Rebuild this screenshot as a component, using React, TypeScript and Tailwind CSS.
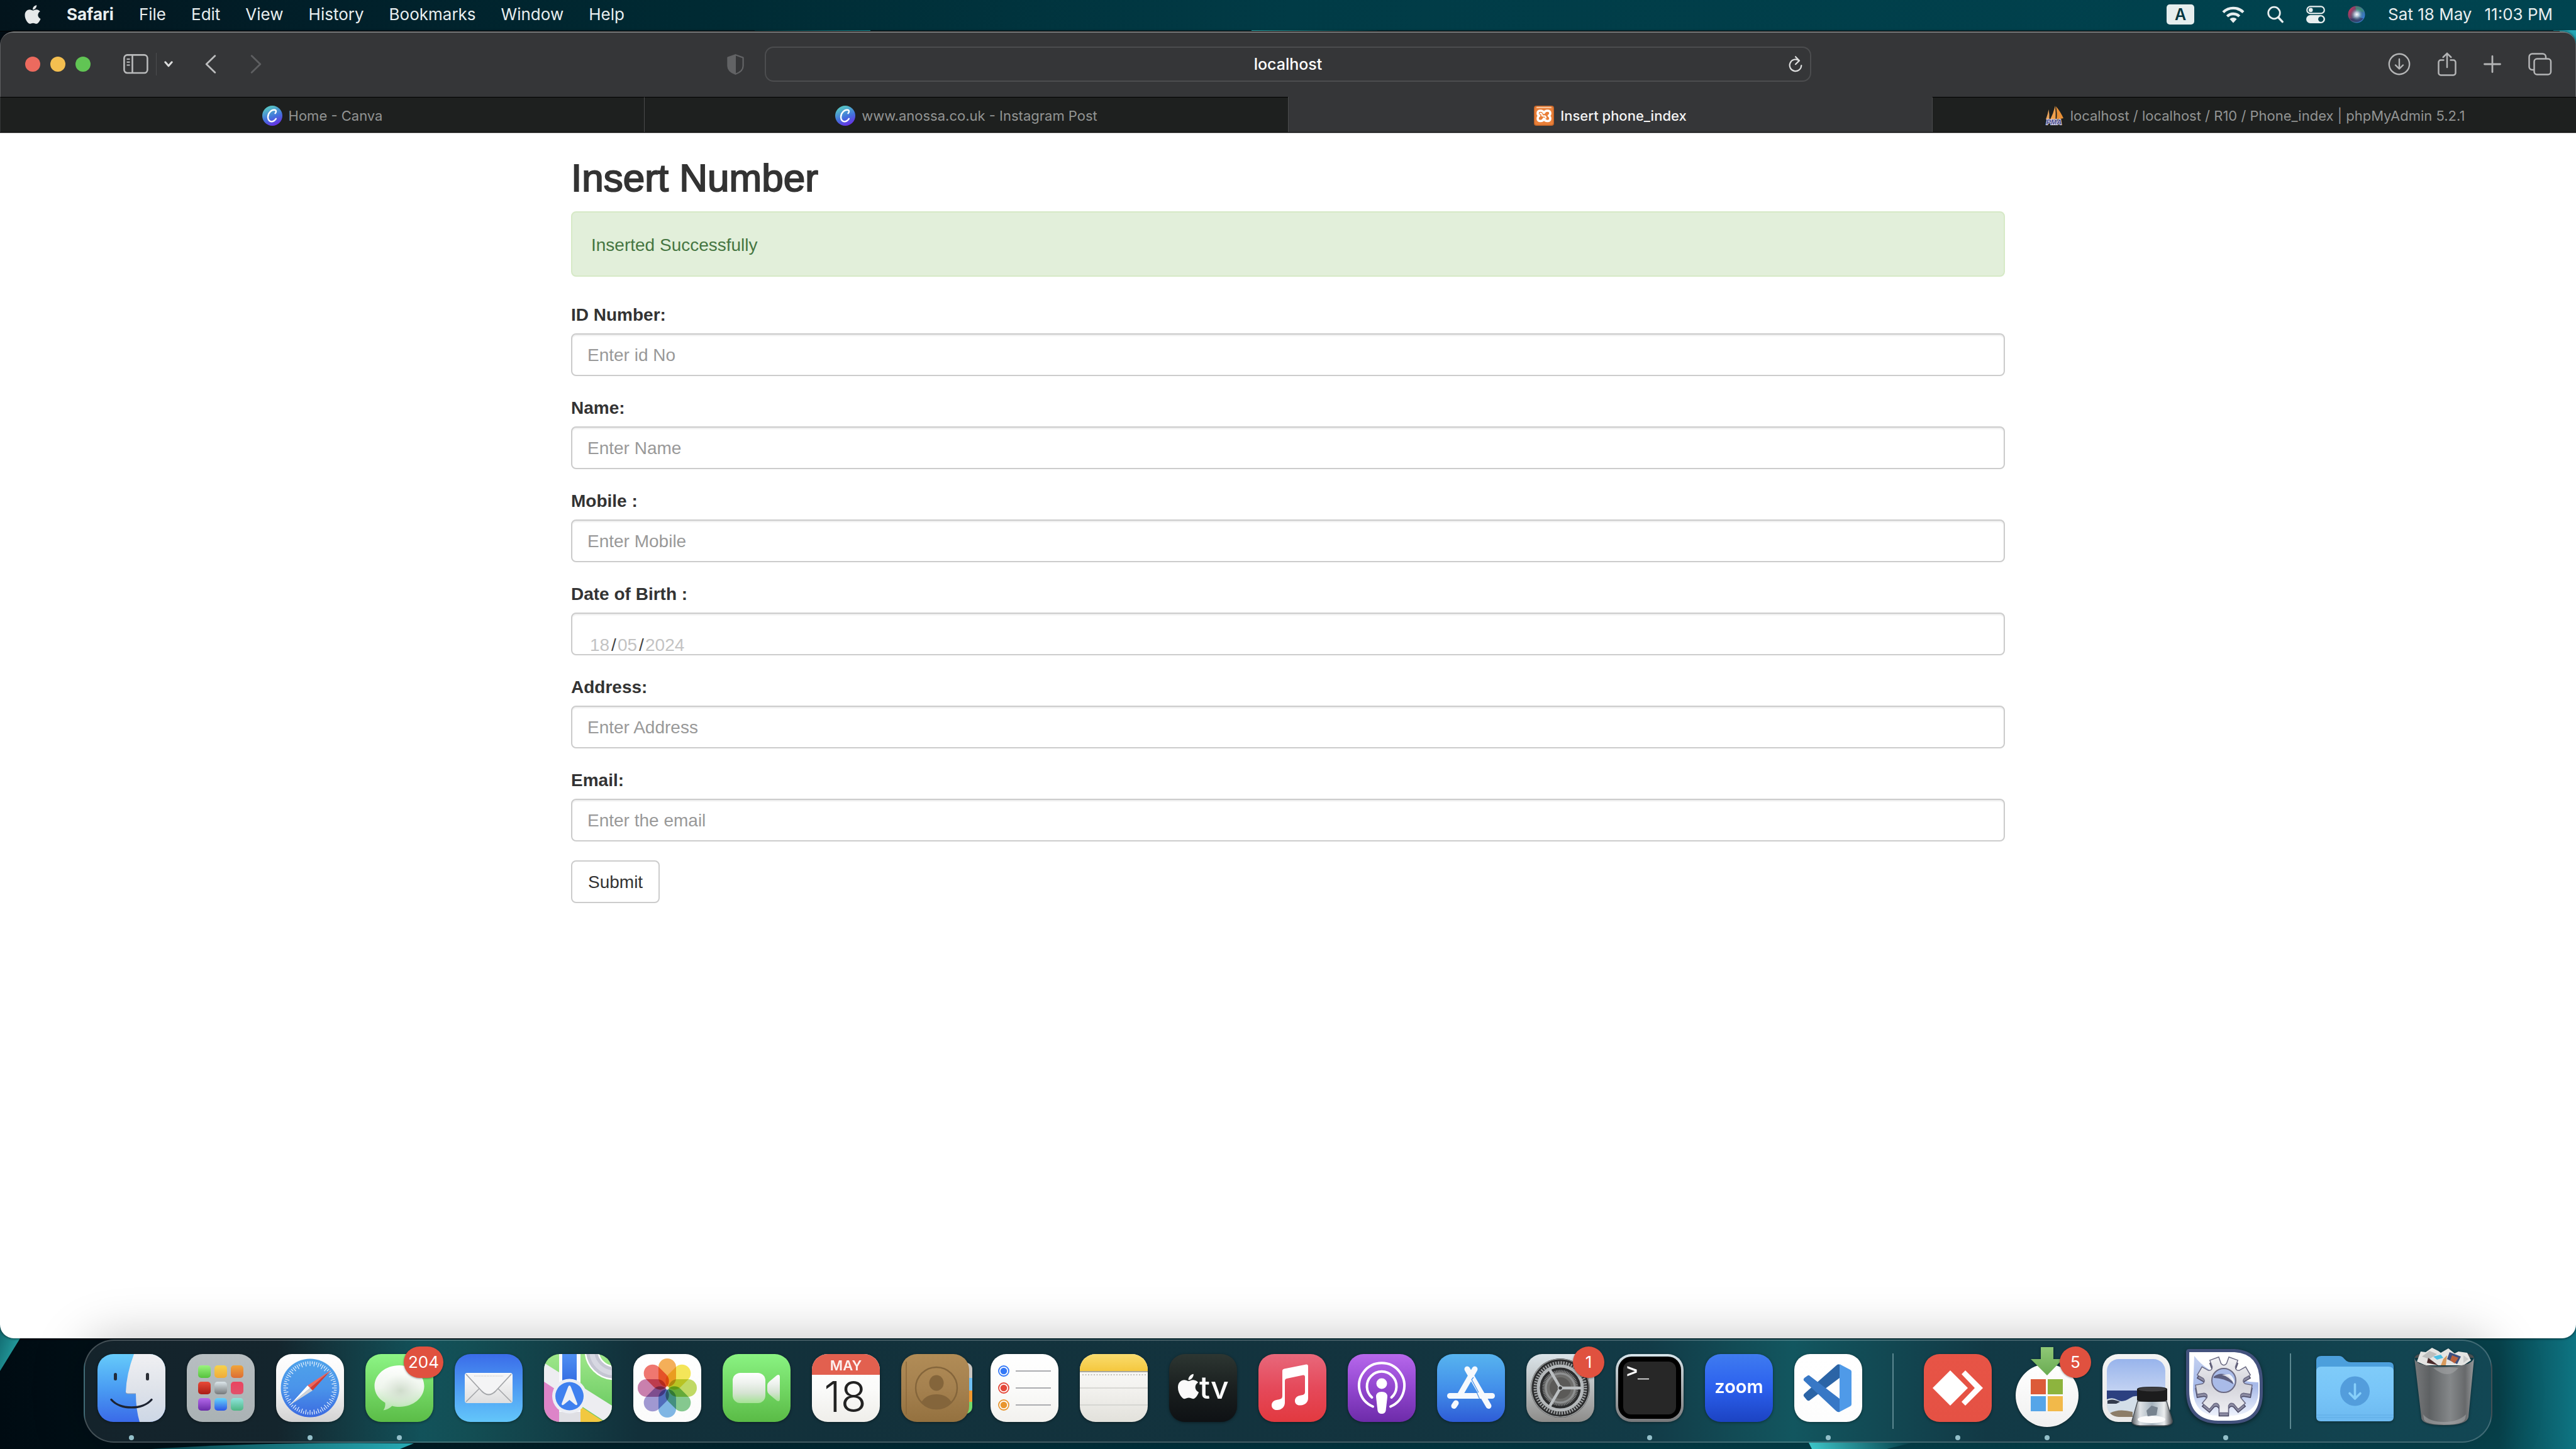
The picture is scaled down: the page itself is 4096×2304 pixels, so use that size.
import type { ReactNode } from "react";
import { FaApple } from "react-icons/fa";

const menus = ["File", "Edit", "View", "History", "Bookmarks", "Window", "Help"];

/* ---------- Wallpaper ---------- */

function Wallpaper() {
  return (
    <svg
      aria-hidden="true"
      className="absolute inset-0 h-full w-full"
      viewBox="0 0 4096 2304"
      preserveAspectRatio="none"
    >
      <defs>
        <linearGradient id="wpTop" x1="0" x2="1" y1="0" y2="0">
          <stop offset="0" stopColor="#03141c" />
          <stop offset="0.12" stopColor="#011f29" />
          <stop offset="0.27" stopColor="#002a33" />
          <stop offset="0.5" stopColor="#013b46" />
          <stop offset="1" stopColor="#004450" />
        </linearGradient>
        <linearGradient id="wpBase" x1="0" x2="1" y1="0" y2="0">
          <stop offset="0" stopColor="#000b12" />
          <stop offset="0.14" stopColor="#021c24" />
          <stop offset="0.4" stopColor="#01303c" />
          <stop offset="0.7" stopColor="#04414c" />
          <stop offset="0.93" stopColor="#06434f" />
          <stop offset="0.97" stopColor="#07434d" />
          <stop offset="1" stopColor="#0e7583" />
        </linearGradient>
        <linearGradient id="wpTri" x1="0" x2="1" y1="0" y2="1">
          <stop offset="0" stopColor="#0e5f66" />
          <stop offset="1" stopColor="#2bb0b0" />
        </linearGradient>
        <linearGradient id="wpGlow" x1="0" x2="1">
          <stop offset="0" stopColor="#0a4c55" />
          <stop offset="1" stopColor="#2cc0cb" />
        </linearGradient>
        <linearGradient id="wpGlowB" x1="0" x2="1">
          <stop offset="0" stopColor="#45dfe2" />
          <stop offset="1" stopColor="#064753" />
        </linearGradient>
      </defs>
      <rect width="4096" height="2304" fill="url(#wpBase)" />
      <rect width="4096" height="50" fill="url(#wpTop)" />
      <rect x="1200" y="48" width="184" height="1" fill="url(#wpGlow)" />
      <rect x="1990" y="48" width="200" height="1" fill="url(#wpGlowB)" />
      <rect x="4060" y="48" width="36" height="40" fill="#24a5b4" />
      <rect y="49" width="4070" height="1" fill="#000" />
      <path d="M0 2090V2180L32 2128V2090Z" fill="url(#wpTri)" />
      <path d="M240 2304Q420 2292 658 2295L636 2304Z" fill="url(#wpGlow)" />
      <path d="M2876 2294H3040L3000 2304H2881Z" fill="url(#wpGlowB)" />
    </svg>
  );
}

/* ---------- Menu bar ---------- */

function MenuBar() {
  return (
    <header className="relative flex h-[50px] shrink-0 items-center justify-between pr-[37px] pl-[38px] pb-[4px] text-[26px] leading-[32px] text-[#e8eeef]">
      <nav className="flex items-center gap-[40px]">
        <button aria-label="Apple menu" className="flex h-[36px] w-[28px] items-center justify-center">
          <FaApple className="h-[34px] w-[28px] text-[#e6e9ea]" />
        </button>
        <button className="font-bold">Safari</button>
        {menus.map((m) => (
          <button key={m}>{m}</button>
        ))}
      </nav>
      <div className="flex items-center gap-[36px]">
        <button className="mr-2 flex h-[32px] w-[44px] items-center justify-center rounded-[5px] bg-[#e6eeee] text-[25px] font-semibold text-[#02353f]">
          A
        </button>
        <button aria-label="Wi-Fi">
          <svg width="36" height="28" viewBox="0 0 36 28" fill="none" stroke="#e8eeef" strokeWidth="4.4">
            <path d="M2 10.5a22.6 22.6 0 0 1 32 0" />
            <path d="M8.3 17a13.7 13.7 0 0 1 19.4 0" />
            <path d="M18 27.5l-5.6-6.3a8.2 8.2 0 0 1 11.2 0z" fill="#e8eeef" stroke="none" />
          </svg>
        </button>
        <button aria-label="Search">
          <svg width="26" height="28" viewBox="0 0 26 28" fill="none" stroke="#e8eeef" strokeWidth="2.8" strokeLinecap="round">
            <circle cx="11" cy="11.5" r="9.3" />
            <path d="M18 19l6.2 6.6" strokeWidth="3.4" />
          </svg>
        </button>
        <button aria-label="Control Centre">
          <svg width="30" height="28" viewBox="0 0 30 28">
            <rect x="1.2" y="1.4" width="27.6" height="11" rx="5.5" fill="none" stroke="#e8eeef" strokeWidth="2.2" />
            <circle cx="7.2" cy="6.9" r="3.3" fill="#e8eeef" />
            <rect x="0" y="15" width="30" height="13" rx="6.5" fill="#e8eeef" />
            <circle cx="23.3" cy="21.5" r="4.2" fill="#02424d" />
          </svg>
        </button>
        <button aria-label="Siri">
          <svg width="28" height="28" viewBox="0 0 28 28">
            <defs>
              <linearGradient id="siriBase" x1="0" y1="0.2" x2="1" y2="0.8">
                <stop offset="0" stopColor="#d0335a" />
                <stop offset="0.4" stopColor="#5c4a70" />
                <stop offset="0.6" stopColor="#3a6f94" />
                <stop offset="1" stopColor="#3a7fe0" />
              </linearGradient>
              <radialGradient id="siriCore" cx="0.52" cy="0.5" r="0.4">
                <stop offset="0" stopColor="#fff" />
                <stop offset="0.4" stopColor="#d8e9f5" stopOpacity="0.7" />
                <stop offset="1" stopColor="#6aa" stopOpacity="0" />
              </radialGradient>
            </defs>
            <circle cx="14" cy="14" r="13.5" fill="url(#siriBase)" />
            <path d="M12 1a13 13 0 0 1 14 10q-6-4-12-1z" fill="#3f8f78" opacity="0.8" />
            <path d="M3 20q8 3 12-6q4 6 10 6a13 13 0 0 1-22 0z" fill="#33305c" opacity="0.7" />
            <circle cx="14" cy="14" r="12" fill="url(#siriCore)" />
          </svg>
        </button>
        <button className="flex gap-[20px]">
          <span>Sat 18 May</span>
          <span>11:03 PM</span>
        </button>
      </div>
    </header>
  );
}

/* ---------- Browser chrome ---------- */

function TitleBar() {
  return (
    <div className="grid h-[104px] grid-cols-[1fr_minmax(0,1664px)_1fr] items-center rounded-t-[20px] border-x border-t-2 border-x-[#5d5e60] border-t-[#77797a] bg-[#353638] pb-[2px]">
      <div className="flex items-center pl-[39px]">
        <div className="flex gap-4">
          <button aria-label="Close" className="size-6 rounded-full bg-[#ec6a5e]" />
          <button aria-label="Minimise" className="size-6 rounded-full bg-[#f4bf50]" />
          <button aria-label="Zoom" className="size-6 rounded-full bg-[#61c554]" />
        </div>
        <button aria-label="Show sidebar" className="ml-[52px]">
          <svg width="40" height="32" viewBox="0 0 40 32" fill="none" stroke="#b9babb" strokeWidth="2.6">
            <rect x="1.4" y="1.4" width="37" height="28.6" rx="5" />
            <path d="M14.5 1.4V30" />
            <path d="M5.5 8h5M5.5 12.8h5M5.5 17.6h5" strokeWidth="2" />
          </svg>
        </button>
        <div className="ml-3 h-[36px] w-px bg-[#4b4c4e]" />
        <button aria-label="Tab groups" className="ml-3">
          <svg width="14" height="10" viewBox="0 0 14 10" fill="none" stroke="#dcdddd" strokeWidth="3" strokeLinecap="round" strokeLinejoin="round">
            <path d="M1.8 1.8L7 7.8l5.2-6" />
          </svg>
        </button>
        <button aria-label="Back" className="ml-[51px]">
          <svg width="18" height="30" viewBox="0 0 18 30" fill="none" stroke="#bcbdbe" strokeWidth="2.8" strokeLinecap="round" strokeLinejoin="round">
            <path d="M15.8 1.8L2.2 15l13.6 13.2" />
          </svg>
        </button>
        <button aria-label="Forward" className="ml-[54px]">
          <svg width="18" height="30" viewBox="0 0 18 30" fill="none" stroke="#5e5f61" strokeWidth="2.8" strokeLinecap="round" strokeLinejoin="round">
            <path d="M2.2 1.8L15.8 15L2.2 28.2" />
          </svg>
        </button>
        <button aria-label="Privacy report" className="mr-[33px] ml-auto">
          <svg width="27" height="33" viewBox="0 0 27 33">
            <path d="M13.5 1.2L25.6 5.6V19q0 8.5-12.1 12.8Q1.4 27.5 1.4 19V5.6z" fill="none" stroke="#626365" strokeWidth="2.2" strokeLinejoin="round" />
            <path d="M14 1L1 5.6V19q0 8.5 13 13z" fill="#626365" />
          </svg>
        </button>
      </div>
      <div className="flex h-[56px] items-center rounded-[14px] border-2 border-[#4c4d4f] px-[12px]">
        <div className="w-[22px]" />
        <input
          aria-label="Address"
          defaultValue="localhost"
          className="min-w-0 flex-1 bg-transparent text-center text-[25px] leading-[32px] font-medium text-white outline-none"
        />
        <button aria-label="Reload">
          <svg width="22" height="28" viewBox="0 0 22 28" fill="none" stroke="#dcdddd" strokeWidth="2.2" strokeLinecap="round" strokeLinejoin="round">
            <path d="M16.5 8.3A9.3 9.3 0 1 0 20.3 16" />
            <path d="M11 2.2l6 6.2l-6 5.8" />
          </svg>
        </button>
      </div>
      <div className="flex items-center justify-end gap-[43px] pr-[37px]">
        <button aria-label="Downloads">
          <svg width="36" height="36" viewBox="0 0 36 36" fill="none" stroke="#b4b5b6" strokeWidth="2.4" strokeLinecap="round" strokeLinejoin="round">
            <circle cx="18" cy="18" r="16.2" />
            <path d="M18 10v15M12 19.5l6 6l6-6" />
          </svg>
        </button>
        <button aria-label="Share">
          <svg width="30" height="38" viewBox="0 0 30 38" fill="none" stroke="#b4b5b6" strokeWidth="2.5" strokeLinecap="round" strokeLinejoin="round">
            <path d="M9.5 12.5H5a3.5 3.5 0 0 0-3.5 3.5V33A3.5 3.5 0 0 0 5 36.5h20a3.5 3.5 0 0 0 3.5-3.5V16a3.5 3.5 0 0 0-3.5-3.5h-4.5" />
            <path d="M15 24V1.8M8.7 8L15 1.8L21.3 8" />
          </svg>
        </button>
        <button aria-label="New tab">
          <svg width="28" height="28" viewBox="0 0 28 28" stroke="#b4b5b6" strokeWidth="2.8" strokeLinecap="round">
            <path d="M14 1.5v25M1.5 14h25" />
          </svg>
        </button>
        <button aria-label="Tab overview">
          <svg width="38" height="36" viewBox="0 0 38 36" fill="none" stroke="#b4b5b6" strokeWidth="2.5">
            <rect x="9.5" y="9.5" width="26.5" height="25" rx="4.5" />
            <path d="M9.5 27H6.5A4.8 4.8 0 0 1 1.5 22V6.5A5 5 0 0 1 6.5 1.5H23a5 5 0 0 1 5 5v3" />
          </svg>
        </button>
      </div>
    </div>
  );
}

function CanvaIcon({ id }: { id: string }) {
  return (
    <svg width="32" height="32" viewBox="0 0 32 32">
      <defs>
        <linearGradient id={id} x1="0.3" y1="0" x2="0.7" y2="1">
          <stop offset="0.1" stopColor="#55bfc6" />
          <stop offset="0.55" stopColor="#4374dc" />
          <stop offset="1" stopColor="#6a2ae6" />
        </linearGradient>
      </defs>
      <circle cx="16" cy="16" r="16" fill={`url(#${id})`} />
      <path
        d="M20.5 12.2c2-1.2 2.3-5-1-5.4C13.8 6.2 8.9 12.6 9 18.3c.1 4.7 3 7.3 6.3 7 3-.3 5-2 6.6-4.6"
        fill="none"
        stroke="#fff"
        strokeWidth="2.4"
        strokeLinecap="round"
      />
    </svg>
  );
}

function XamppIcon() {
  return (
    <svg width="32" height="32" viewBox="0 0 32 32">
      <rect width="32" height="32" rx="4" fill="#c5662a" />
      <rect x="1.5" y="1.5" width="29" height="29" rx="3" fill="#ea8039" />
      <rect x="4" y="1.8" width="24" height="2.2" rx="1" fill="#f6c39c" />
      <path
        d="M16 11.5Q14.5 8 10.5 8Q6 8 6 12Q6 15 8.500 16Q6 17.500 6 20.500Q6 24.500 10.500 24.500Q14.500 24.500 16 20.500Q17.500 24.500 21.500 24.500Q26 24.500 26 20.500Q26 17.500 23.500 16Q26 15 26 12Q26 8 21.500 8Q17.500 8 16 11.500Z"
        fill="none"
        stroke="#fff"
        strokeWidth="3.6"
        strokeLinejoin="round"
      />
      <path d="M10 12.5Q13 12 13 16M19 19.500Q19 15.500 14.500 16.500" fill="none" stroke="#fff" strokeWidth="2.2" strokeLinecap="round" />
    </svg>
  );
}

function PmaIcon() {
  return (
    <svg width="32" height="32" viewBox="0 0 32 32">
      <path d="M3 22Q6 14 7.5 6Q9 14 8.5 22z" fill="#e8a35c" />
      <path d="M10 22Q15 12 18 0Q19 12 18.5 22z" fill="#f0a04c" />
      <path d="M19 1q7 8 12 19l-11 2q1.5-10-1-21z" fill="#e88f35" />
      <text
        x="16"
        y="30"
        textAnchor="middle"
        fontSize="11"
        fontWeight="700"
        fontStyle="italic"
        fontFamily="Liberation Sans"
        fill="#4a4a8c"
        stroke="#dcdcec"
        strokeWidth="2"
        paintOrder="stroke"
      >
        PMA
      </text>
    </svg>
  );
}

const tabs: { title: string; icon: ReactNode; active?: boolean }[] = [
  { title: "Home - Canva", icon: <CanvaIcon id="cv1" /> },
  { title: "www.anossa.co.uk - Instagram Post", icon: <CanvaIcon id="cv2" /> },
  { title: "Insert phone_index", icon: <XamppIcon />, active: true },
  { title: "localhost / localhost / R10 / Phone_index | phpMyAdmin 5.2.1", icon: <PmaIcon /> },
];

function TabBar() {
  return (
    <div role="tablist" className="flex h-[57px] border-b border-black">
      {tabs.map((t) => (
        <button
          key={t.title}
          role="tab"
          aria-selected={!!t.active}
          className={
            t.active
              ? "flex min-w-0 flex-1 items-center justify-center gap-[10px] border-l border-[#4a4b4c] bg-[#353638] pt-[3px] text-[22px] leading-[32px] font-medium text-[#f4f4f4]"
              : "flex min-w-0 flex-1 items-center justify-center gap-[10px] border-t border-l border-t-black border-l-[#4a4b4c] bg-[#1e201f] pt-[2px] text-[22px] leading-[32px] text-[#929493] first:border-l-[#353638]"
          }
        >
          {t.icon}
          <span>{t.title}</span>
        </button>
      ))}
    </div>
  );
}

/* ---------- Page ---------- */

const labelClass = "mb-[8px] block text-[28px] leading-[42px] font-bold text-[#333333]";
const boxClass =
  "block h-[68px] w-full rounded-[8px] border-2 border-[#cccccc] bg-white px-6 pt-[2px] text-[28px] text-[#555555] shadow-[inset_0_2px_2px_rgba(0,0,0,0.075)] placeholder:text-[#999999] outline-none";

function Field({ id, label, placeholder, type = "text" }: { id: string; label: string; placeholder: string; type?: string }) {
  return (
    <div className="mb-[30px]">
      <label htmlFor={id} className={labelClass}>
        {label}
      </label>
      <input id={id} type={type} placeholder={placeholder} className={boxClass} />
    </div>
  );
}

const datePart = "h-[28px] bg-transparent p-0 text-[28px] leading-[28px] placeholder:text-[#c3c3c3] outline-none";

function DateField() {
  return (
    <div className="mb-[30px]">
      <label htmlFor="dob-day" className={labelClass}>
        Date of Birth :
      </label>
      <div className="flex h-[68px] w-full items-end overflow-hidden rounded-[8px] border-2 border-[#cccccc] bg-white px-[28px] text-[28px] leading-[28px] text-[#444444] shadow-[inset_0_2px_2px_rgba(0,0,0,0.075)]">
        <input id="dob-day" placeholder="18" className={`${datePart} w-[32px]`} />
        <span className="w-3 text-center">/</span>
        <input aria-label="Month" placeholder="05" className={`${datePart} w-[32px]`} />
        <span className="w-3 text-center">/</span>
        <input aria-label="Year" placeholder="2024" className={`${datePart} w-[72px]`} />
      </div>
    </div>
  );
}

function InsertPage() {
  return (
    <main className="flex-1 border-t border-[#b5b5b5] bg-white font-['Liberation_Sans',Arial,sans-serif]">
      <div className="mx-auto w-full max-w-[2280px] pt-[38px]">
        <h2 className="mb-5 text-[62px] leading-[66px] font-normal text-[#333333] [-webkit-text-stroke:2px_#333333]">
          Insert Number
        </h2>
        <div role="alert" className="mb-10 rounded-[8px] border-2 border-[#d6e9c6] bg-[#e2efda] px-[30px] pt-[32px] pb-[28px] text-[28px] leading-[40px] text-[#467642]">
          Inserted Successfully
        </div>
        <form onSubmit={(e) => e.preventDefault()}>
          <Field id="idno" label="ID Number:" placeholder="Enter id No" />
          <Field id="name" label="Name:" placeholder="Enter Name" />
          <Field id="mobile" label="Mobile :" placeholder="Enter Mobile" />
          <DateField />
          <Field id="address" label="Address:" placeholder="Enter Address" />
          <Field id="email" label="Email:" placeholder="Enter the email" type="email" />
          <button type="submit" className="h-[68px] rounded-[8px] border-2 border-[#cccccc] bg-white px-[25px] pt-[2px] text-[28px] leading-[40px] text-[#333333]">
            Submit
          </button>
        </form>
      </div>
    </main>
  );
}

/* ---------- Dock icons ---------- */

function Grad({ id, stops }: { id: string; stops: string[] }) {
  return (
    <linearGradient id={id} x1="0" y1="0" x2="0" y2="1">
      {stops.map((c, i) => (
        <stop key={i} offset={i / (stops.length - 1)} stopColor={c} />
      ))}
    </linearGradient>
  );
}

function Tile({ id, stops, children }: { id: string; stops: string[]; children?: ReactNode }) {
  return (
    <svg width="108" height="108" viewBox="0 0 108 108" className="overflow-visible drop-shadow-[0_1px_2px_rgba(0,0,0,0.4)]">
      <defs>
        <Grad id={`${id}-bg`} stops={stops} />
        <clipPath id={`${id}-clip`}>
          <rect width="108" height="108" rx="25" />
        </clipPath>
      </defs>
      <rect width="108" height="108" rx="25" fill={`url(#${id}-bg)`} />
      {children}
    </svg>
  );
}

function FinderIcon() {
  return (
    <Tile id="finder" stops={["#66cbfa", "#4a9df3", "#3a6ae8"]}>
      <defs>
        <Grad id="finder-r" stops={["#f0f0f3", "#dfe3ea", "#cdd7e6"]} />
      </defs>
      <path clipPath="url(#finder-clip)" d="M58 0Q46 32 45 60Q45 63 48 63H61Q61 88 67 108H108V0Z" fill="url(#finder-r)" />
      <path d="M45 61Q45 63 48 63H61" fill="none" stroke="#8b98b0" strokeWidth="1" />
      <rect x="26" y="30" width="5" height="12" rx="2.5" fill="#222c3c" />
      <rect x="77" y="30" width="5" height="12" rx="2.5" fill="#2c2f36" />
      <path d="M22 72.5C36 89 72 89 86 72.5" fill="none" stroke="#1c2230" strokeWidth="3.4" strokeLinecap="round" />
    </Tile>
  );
}

const padColors = [
  ["#9af47e", "#56c13d"],
  ["#f6d24c", "#f0ab3a"],
  ["#efa53b", "#dc6d35"],
  ["#e94a38", "#a91d16"],
  ["#dbe6ea", "#76797b"],
  ["#ea4460", "#e0526b"],
  ["#b468ea", "#6a2ba8"],
  ["#66d5fb", "#2d55e6"],
  ["#8fe4dc", "#4db583"],
];

function LaunchpadIcon() {
  return (
    <Tile id="pad" stops={["#b7bec1", "#aab2b4"]}>
      <defs>
        {padColors.map((c, i) => (
          <Grad key={i} id={`pad-${i}`} stops={c} />
        ))}
      </defs>
      {padColors.map((_, i) => (
        <rect key={i} x={18 + (i % 3) * 26} y={18 + Math.floor(i / 3) * 26} width="20" height="20" rx="5" fill={`url(#pad-${i})`} />
      ))}
    </Tile>
  );
}

function SafariIcon() {
  return (
    <Tile id="saf" stops={["#ffffff", "#f4f4f4", "#d2d2d2"]}>
      <defs>
        <Grad id="saf-c" stops={["#4fa3ea", "#4a94ea", "#3b6ae0"]} />
      </defs>
      <circle cx="54" cy="54" r="46.5" fill="url(#saf-c)" />
      {Array.from({ length: 72 }, (_, i) => (
        <path key={i} d={i % 2 ? "M54 11.5v4.5" : "M54 11.5v7.5"} stroke="#e8f1fb" strokeWidth="1.2" transform={`rotate(${i * 5} 54 54)`} />
      ))}
      <path d="M87 26L50 50L54 54Z" fill="#f0685c" />
      <path d="M87 26L54 54L58 58Z" fill="#d23c33" />
      <path d="M22 81L50 50L54 54Z" fill="#ffffff" />
      <path d="M22 81L54 54L58 58Z" fill="#cfd2d6" />
    </Tile>
  );
}

function MessagesIcon() {
  return (
    <Tile id="msg" stops={["#8df585", "#5bbc47"]}>
      <defs>
        <Grad id="msg-b" stops={["#ffffff", "#eef5ec", "#b6e3ae"]} />
        <radialGradient id="msg-s" cx="0.5" cy="0.55" r="0.5">
          <stop offset="0" stopColor="#cfdccb" />
          <stop offset="1" stopColor="#dfe6dd" stopOpacity="0" />
        </radialGradient>
      </defs>
      <path d="M54 18C32 18 14.5 32.5 14.5 51C14.5 62 21 71.5 31.5 77.5C32 82 31 86 28.5 89.5C34.5 88.5 38.5 86 42.5 82.5C46 83.5 50 84 54 84C76 84 93.5 69.5 93.5 51S76 18 54 18Z" fill="url(#msg-b)" />
      <ellipse cx="56" cy="56" rx="32" ry="26" fill="url(#msg-s)" />
    </Tile>
  );
}

function MailIcon() {
  return (
    <Tile id="mail" stops={["#3a6ce9", "#4e9cf3", "#63c6fa"]}>
      <defs>
        <Grad id="mail-e" stops={["#fafafa", "#dededf"]} />
      </defs>
      <rect x="16" y="30" width="76" height="48" rx="4" fill="url(#mail-e)" />
      <path d="M18 76L40 54M90 76L68 54" stroke="#a3a5a8" strokeWidth="1.6" />
      <path d="M18 32L43 59Q54 70 65 59L90 32" fill="#f4f4f5" stroke="#a3a5a8" strokeWidth="1.8" />
      <path d="M31 35h46" stroke="#dcdcdc" strokeWidth="2" strokeDasharray="1.5 1" />
    </Tile>
  );
}

function MapsIcon() {
  return (
    <Tile id="maps" stops={["#9ee78a", "#62c55a"]}>
      <defs>
        <Grad id="maps-b" stops={["#4f8ff2", "#2c62dd"]} />
      </defs>
      <g clipPath="url(#maps-clip)">
        <path d="M0 40L26 58V108H0Z" fill="#dd84c8" />
        <path d="M56 82L96 108H56Z" fill="#f2c840" />
        <path d="M0 14L108 82V108H98L0 44Z" fill="#ededf1" />
        <rect x="24" y="0" width="34" height="108" fill="#fafafc" />
        <rect x="24" y="92" width="34" height="16" fill="#dfdfe4" />
        <rect x="29" y="0" width="23" height="60" fill="url(#maps-b)" />
        <circle cx="112" cy="-6" r="36" fill="none" stroke="#fff" strokeWidth="23" />
        <circle cx="112" cy="-6" r="36" fill="none" stroke="#c4c5d2" strokeWidth="18" />
        <circle cx="112" cy="-6" r="36" fill="none" stroke="#d7d8e2" strokeWidth="8" />
      </g>
      <circle cx="40.5" cy="67" r="27.5" fill="#eceef4" />
      <circle cx="40.5" cy="67" r="22.5" fill="#3f80ef" />
      <path d="M40.5 50Q42 50 43 53L53 79Q53 83 49 80L40.5 73L32 80Q28 83 28 79L38 53Q39 50 40.5 50Z" fill="#eef0f6" />
    </Tile>
  );
}

const petals = ["#f2a13c", "#f3e13c", "#b5d24a", "#6fbf7b", "#6aa9e0", "#8f86c9", "#c0699f", "#ec5f57"];

function PhotosIcon() {
  return (
    <Tile id="photos" stops={["#ffffff", "#fbfbfb"]}>
      <g className="isolate">
        {petals.map((c, i) => (
          <rect
            key={i}
            x="40"
            y="7"
            width="28"
            height="45"
            rx="14"
            fill={c}
            opacity="0.85"
            className="mix-blend-multiply"
            transform={`rotate(${i * 45} 54 54)`}
          />
        ))}
      </g>
      <circle cx="54" cy="54" r="2.5" fill="#f3ead8" />
    </Tile>
  );
}

function FaceTimeIcon() {
  return (
    <Tile id="ft" stops={["#8af382", "#5abb46"]}>
      <defs>
        <Grad id="ft-b" stops={["#ffffff", "#eef2ee", "#d5e3d2", "#a5e295"]} />
      </defs>
      <rect x="16" y="30" width="52" height="48" rx="12" fill="url(#ft-b)" />
      <path d="M71 50Q71 46.5 74 44L86 34Q91 31 91 37V71Q91 77 86 74L74 64Q71 61.5 71 58Z" fill="url(#ft-b)" />
    </Tile>
  );
}

function CalendarIcon() {
  return (
    <Tile id="cal" stops={["#ffffff", "#fbfbfa", "#efeeea"]}>
      <path clipPath="url(#cal-clip)" d="M0 0H108V33H0Z" fill="#e2604f" />
      <text x="54" y="26" textAnchor="middle" fontSize="22" fontWeight="600" fill="#fdf1ef">
        MAY
      </text>
      <text x="53" y="92" textAnchor="middle" fontSize="67" fontWeight="300" fill="#232323">
        18
      </text>
    </Tile>
  );
}

function ContactsIcon() {
  return (
    <svg width="108" height="108" viewBox="0 0 108 108" className="overflow-visible drop-shadow-[0_1px_2px_rgba(0,0,0,0.4)]">
      <defs>
        <Grad id="con-bg" stops={["#b18c56", "#a5814f", "#94713f"]} />
      </defs>
      <path d="M98 12Q113 14 113 24V38H98Z" fill="#c9c5c0" />
      <path d="M98 38H113V58H98Z" fill="#6fc0f5" />
      <path d="M98 58H113V76H98Z" fill="#f0982f" />
      <path d="M98 76H113V84Q113 94 98 97Z" fill="#72d96a" />
      <rect width="108" height="108" rx="25" fill="url(#con-bg)" />
      <path d="M8 12V96" stroke="#8a683a" strokeWidth="2" opacity="0.7" />
      <circle cx="56" cy="54" r="33" fill="none" stroke="#84653b" strokeWidth="2.4" />
      <ellipse cx="56" cy="46" rx="11.5" ry="12.5" fill="#84653b" />
      <path d="M32.5 76Q40 64 56 64T79.5 76Q70 87.5 56 87.5T32.5 76Z" fill="#84653b" />
    </svg>
  );
}

function RemindersIcon() {
  return (
    <Tile id="rem" stops={["#ffffff", "#fbfbfa", "#f2f1ee"]}>
      {["#3478f6", "#e4483a", "#e8962f"].map((c, i) => (
        <g key={c}>
          <circle cx="21" cy={27 + i * 27} r="8" fill="#fff" stroke={c} strokeWidth="1.8" />
          <circle cx="21" cy={27 + i * 27} r="5.3" fill={c} />
          <path d={`M40 ${27 + i * 27}H96`} stroke="#abacb0" strokeWidth="2" />
        </g>
      ))}
    </Tile>
  );
}

function NotesIcon() {
  return (
    <Tile id="notes" stops={["#fdfdfc", "#f3f2ef", "#e2e1db"]}>
      <defs>
        <Grad id="notes-y" stops={["#f9dc6e", "#f5c83e"]} />
      </defs>
      <path clipPath="url(#notes-clip)" d="M0 0H108V27H0Z" fill="url(#notes-y)" />
      <path d="M0 28H108" stroke="#a9a79c" strokeWidth="2" />
      <path d="M4 33H105" stroke="#c4c2bc" strokeWidth="2" strokeDasharray="2 2.5" />
      <path d="M0 54H108M0 81H108" stroke="#d0cfcb" strokeWidth="1.4" />
    </Tile>
  );
}

function TvIcon() {
  return (
    <Tile id="tv" stops={["#2d3632", "#1a1f1f", "#0e1114"]}>
      <FaApple x="8" y="29" size={45} color="#fafafa" />
      <text x="48" y="71" fontSize="50" fontWeight="500" fill="#fafafa">
        tv
      </text>
    </Tile>
  );
}

function MusicIcon() {
  return (
    <Tile id="music" stops={["#e8687b", "#e5495a", "#e2393f"]}>
      <path
        d="M38 27Q38 24 41 23.5L76 16.5Q79 16 79 19V70C79 77 74 81 67 81.5C61 82 58 78.5 58 74.5C58 69 62 66.5 68 65.5C72 64.8 74 64 74 60V36Q74 33 71 33.5L45 39Q42 39.5 42 43V77C42 84 37 88.5 30.5 89C24.5 89.5 21 86 21 81.5C21 76 25 73.5 31 72.5C36 71.5 38 71 38 66Z"
        fill="#ffffff"
      />
    </Tile>
  );
}

function PodcastsIcon() {
  return (
    <Tile id="pod" stops={["#b768ec", "#9246cf", "#6d2ba9"]}>
      <g fill="none" stroke="#ffffff" strokeWidth="4" strokeLinecap="round">
        <path d="M40 83.5A36 36 0 1 1 68 83.5" />
        <path d="M38.5 69A23.5 23.5 0 1 1 69.5 69" />
      </g>
      <circle cx="54" cy="47" r="8.5" fill="#fff" />
      <path d="M45 68Q45 60 54 60T63 68L60.5 90Q59.5 95 54 95T47.5 90Z" fill="#fff" />
    </Tile>
  );
}

function AppStoreIcon() {
  return (
    <Tile id="store" stops={["#57b4ef", "#4390ea", "#2e5cd6"]}>
      <g stroke="#f6f9fd" strokeWidth="9" strokeLinecap="round" fill="none">
        <path d="M60 24L37 64" />
        <path d="M30 78L27 82.5" />
        <path d="M48 24L82 82.5" />
        <path d="M20.5 66.5H87.5" />
      </g>
      <path d="M58 37L55 40.5L66 61" stroke="#4390ea" strokeWidth="1.2" fill="none" />
      <path d="M63 61L67.5 71" stroke="#4b8fe0" strokeWidth="1.2" />
    </Tile>
  );
}

function SettingsIcon() {
  return (
    <Tile id="set" stops={["#dbe4e9", "#b8bcbd", "#8d8c8a"]}>
      <circle cx="54" cy="54" r="47" fill="#2c2d2e" />
      <circle cx="54" cy="54" r="46" fill="none" stroke="#a9acad" strokeWidth="1.2" />
      <circle cx="54" cy="54" r="40" fill="none" stroke="#9fa2a4" strokeWidth="5" strokeDasharray="2.2 1.99" />
      <circle cx="54" cy="54" r="35" fill="none" stroke="#b4b8ba" strokeWidth="5" />
      <circle cx="54" cy="54" r="26" fill="#6f6f6d" />
      <circle cx="54" cy="54" r="27" fill="none" stroke="#8f9192" strokeWidth="3" strokeDasharray="1.3 1.2" />
      <circle cx="54" cy="54" r="23" fill="none" stroke="#8f9192" strokeWidth="3" />
      <circle cx="54" cy="54" r="17" fill="#5b5a58" />
      {[90, 210, 330].map((a) => (
        <path key={a} d="M54 54V20" stroke="#bcc0c2" strokeWidth="4.5" transform={`rotate(${a} 54 54)`} />
      ))}
      <circle cx="54" cy="54" r="3.5" fill="#3b3b3b" stroke="#c4c8ca" strokeWidth="1.5" />
    </Tile>
  );
}

function TerminalIcon() {
  return (
    <Tile id="term" stops={["#d5e4ea", "#a9adb0", "#77787a"]}>
      <rect x="4" y="4" width="100" height="99" rx="21" fill="#000" />
      <rect x="12" y="12" width="84" height="84" rx="12" fill="#272727" />
      <text x="17" y="37" fontSize="30" fontWeight="700" fontFamily="Liberation Mono" fill="#fff">
        &gt;_
      </text>
    </Tile>
  );
}

function ZoomIcon() {
  return (
    <Tile id="zoom" stops={["#3f7bf0", "#2b60ee", "#1c43c2"]}>
      <text x="54" y="62" textAnchor="middle" fontSize="29" fontWeight="600" fill="#fff">
        zoom
      </text>
    </Tile>
  );
}

function CodeIcon() {
  return (
    <Tile id="code" stops={["#ffffff", "#fdfdfd"]}>
      <path d="M15 67Q14 65 16 63L67 18Q70 15 72 17V38L24 74Q22 75 20 73Z" fill="#2b64a6" />
      <path d="M15 42Q14 40 16 38L21 34.5Q23 33 25 35L72 71V92Q69 93 66 90L15 42Z" fill="#3878c6" />
      <path d="M72 16L89 25Q91 26 91 28V80Q91 82 89 83L72 92Z" fill="#4f9ae8" />
    </Tile>
  );
}

function AnyDeskIcon() {
  return (
    <Tile id="any" stops={["#e75446", "#e55144"]}>
      <path d="M14 54L42 26L70 54L42 82Z" fill="#fff" />
      <path d="M60 32L66 26L94 54L66 82L60 76L81 54Z" fill="#fff" />
    </Tile>
  );
}

function UpdateIcon() {
  return (
    <svg width="108" height="108" viewBox="0 0 108 108" className="overflow-visible drop-shadow-[0_1px_2px_rgba(0,0,0,0.4)]">
      <defs>
        <Grad id="upd" stops={["#ffffff", "#f0f0f0"]} />
        <Grad id="upd-a" stops={["#8fc876", "#6aab52"]} />
      </defs>
      <circle cx="54" cy="66" r="50" fill="url(#upd)" />
      <rect x="28" y="40" width="24" height="24" fill="#dc5b39" />
      <rect x="55" y="40" width="24" height="24" fill="#8db43e" />
      <rect x="28" y="67" width="24" height="24" fill="#55a5e8" />
      <rect x="55" y="67" width="24" height="24" fill="#f2b94a" />
      <path d="M44 -11H64V8H79L54 34L28 8H44Z" fill="url(#upd-a)" />
    </svg>
  );
}

function PreviewIcon() {
  return (
    <Tile id="prev" stops={["#f3f3f3", "#e9e9e9"]}>
      <defs>
        <Grad id="prev-sky" stops={["#98b4ec", "#c2d2f2"]} />
        <clipPath id="prev-photo">
          <rect x="7" y="8" width="93" height="92" rx="19" />
        </clipPath>
        <linearGradient id="prev-jar" x1="0" x2="1">
          <stop offset="0" stopColor="#5a5f64" />
          <stop offset="0.2" stopColor="#e0e4e7" />
          <stop offset="0.5" stopColor="#a3b1bc" />
          <stop offset="0.8" stopColor="#eceeef" />
          <stop offset="1" stopColor="#4a4f54" />
        </linearGradient>
      </defs>
      <g clipPath="url(#prev-photo)">
        <rect x="7" y="8" width="93" height="50" fill="url(#prev-sky)" />
        <rect x="7" y="58" width="93" height="20" fill="#2c4080" />
        <path d="M7 72Q16 68 24 73T44 70T70 74V100H7Z" fill="#d3dee8" />
        <path d="M8 74Q16 70 28 76L22 79H8Z" fill="#333b4c" />
        <path d="M12 94Q26 86 48 92V100H12Z" fill="#8c7d68" />
      </g>
      <path d="M56 75L47 106Q46 113 60 114H98Q112 113 111 106L102 75Z" fill="url(#prev-jar)" stroke="#4c5156" strokeWidth="1.4" />
      <ellipse cx="78" cy="104" rx="22" ry="6" fill="#fbfbfb" />
      <path d="M70 90l8-8l10 3l-2 12l-14 2z" fill="#77838f" />
      <path d="M55 56Q55 52 79 52T103 56V73Q103 76 79 76T55 73Z" fill="#1c1c1d" />
      <ellipse cx="79" cy="56" rx="22" ry="3.5" fill="#3d3d3f" />
    </Tile>
  );
}

function gearPath(cx: number, cy: number, outer: number, inner: number, teeth: number) {
  const pts: string[] = [];
  const step = (Math.PI * 2) / teeth;
  const at = (r: number, a: number) => `${(cx + r * Math.sin(a)).toFixed(1)} ${(cy - r * Math.cos(a)).toFixed(1)}`;
  for (let i = 0; i < teeth; i++) {
    const a = i * step + step / 2;
    pts.push(`${i ? "L" : "M"}${at(inner, a - step * 0.32)}`);
    pts.push(`L${at(outer, a - step * 0.24)}`, `L${at(outer, a + step * 0.24)}`, `L${at(inner, a + step * 0.32)}`);
    pts.push(`Q${at(inner - 5, a + step / 2)} ${at(inner, a + step * 0.68)}`);
  }
  return pts.join("") + "Z";
}

function GearAppIcon() {
  return (
    <svg width="108" height="108" viewBox="0 0 108 108" className="overflow-visible drop-shadow-[0_2px_3px_rgba(0,0,0,0.5)]">
      <defs>
        <Grad id="gear-m" stops={["#f1f1f4", "#d3d3da", "#eeeef2"]} />
        <Grad id="gear-b" stops={["#c3d0f0", "#a7b9e8", "#eef2fc"]} />
      </defs>
      <path d="M-6.5 -3Q-6.5 -5.5 -4 -5.5H68Q110.5 -3 110.5 45V62Q110.5 108.5 62 108.5H42Q-6.5 107 -6.5 58Z" fill="#ffffff" stroke="#43527d" strokeWidth="5" />
      <path d="M4 3Q24 30 60 36Q80 44 106 45V62Q104 96 62 98H42Q4 98 2 58Z" fill="url(#gear-b)" />
      <path d={gearPath(51, 54, 45, 34, 9)} fill="#8d8ca3" stroke="#4c4b66" strokeWidth="1.5" />
      <path d={gearPath(51, 49, 45, 34, 9)} fill="url(#gear-m)" stroke="#6b6a83" strokeWidth="1.5" />
      <circle cx="51" cy="42" r="19" fill="#a9bbe8" stroke="#6b6a83" strokeWidth="2" />
      <path d="M35 38Q51 38 66 48A19 19 0 0 0 35 36Z" fill="#5d6080" />
      <path d="M48 33Q60 36 68 48A18 18 0 0 0 60 32Z" fill="#ffffff" opacity="0.8" />
    </svg>
  );
}

function FolderIcon() {
  return (
    <svg width="108" height="108" viewBox="0 0 108 108" className="overflow-visible drop-shadow-[0_1px_2px_rgba(0,0,0,0.4)]">
      <defs>
        <Grad id="fold" stops={["#7fcbf9", "#78c5f8", "#6db9f0"]} />
      </defs>
      <path d="M-8 10Q-8 3 0 3H28Q33 3 36 7L40 11Q43 13 47 13H108Q115 13 115 20V60H-8Z" fill="#4c9fdc" />
      <path d="M-8 28Q-8 20 0 20H107Q115 20 115 28V100Q115 107 108 107H-1Q-8 107 -8 100Z" fill="url(#fold)" />
      <path d="M-8 97H115M-8 101H115" stroke="#5fabe6" strokeWidth="1.2" />
      <circle cx="53.5" cy="59" r="23.5" fill="#539ddc" />
      <path d="M53.5 48V70M45 62.5L53.5 71L62 62.5" fill="none" stroke="#86cffa" strokeWidth="3.6" strokeLinecap="round" strokeLinejoin="round" />
    </svg>
  );
}

function TrashIcon() {
  return (
    <svg width="108" height="108" viewBox="0 0 108 108" className="overflow-visible drop-shadow-[0_1px_2px_rgba(0,0,0,0.4)]">
      <defs>
        <linearGradient id="can" x1="0" x2="1">
          <stop offset="0" stopColor="#77797b" />
          <stop offset="0.25" stopColor="#5e6163" />
          <stop offset="0.6" stopColor="#85888a" />
          <stop offset="0.85" stopColor="#67696b" />
          <stop offset="1" stopColor="#97999b" />
        </linearGradient>
      </defs>
      <path d="M6 6Q8 0 20 -1H88Q100 0 101 6Z" fill="#4a4d4f" />
      <path d="M10 12L16 -4L24 -3L34 -10L44 -5L48 -2L60 -9L70 -1L76 -4L90 -2L96 10L84 18H24Z" fill="#e4e4e2" />
      <path d="M18 4L30 -5L42 0L30 8Z" fill="#bdbebd" />
      <path d="M28 6L44 18L26 14Z" fill="#4b2b2b" />
      <path d="M36 4L48 1L52 6L42 9Z" fill="#4cbfe4" />
      <path d="M62 -3L80 4L74 16L58 8Z" fill="#3e4f7e" />
      <path d="M66 2L76 6L70 15L63 10Z" fill="#b9603c" />
      <path d="M52 8L58 2L56 18H48Z" fill="#d89a5c" />
      <path d="M84 2L92 8L84 14Z" fill="#c9cac9" />
      <path d="M6 6Q8 20 53 20T101 6L92 100Q90 113 53 113T17 100Z" fill="url(#can)" />
      <path d="M36 22Q60 42 76 22Z" fill="#a1a4a5" opacity="0.6" />
      <path d="M20 96Q30 108 53 108T88 96L87 103Q84 112 53 112T21 103Z" fill="#a8aaac" opacity="0.55" />
    </svg>
  );
}

/* ---------- Dock ---------- */

type DockApp = { name: string; icon: ReactNode; badge?: string; running?: boolean };

const dockGroups: DockApp[][] = [
  [
    { name: "Finder", icon: <FinderIcon />, running: true },
    { name: "Launchpad", icon: <LaunchpadIcon /> },
    { name: "Safari", icon: <SafariIcon />, running: true },
    { name: "Messages", icon: <MessagesIcon />, badge: "204", running: true },
    { name: "Mail", icon: <MailIcon /> },
    { name: "Maps", icon: <MapsIcon /> },
    { name: "Photos", icon: <PhotosIcon /> },
    { name: "FaceTime", icon: <FaceTimeIcon /> },
    { name: "Calendar", icon: <CalendarIcon /> },
    { name: "Contacts", icon: <ContactsIcon /> },
    { name: "Reminders", icon: <RemindersIcon /> },
    { name: "Notes", icon: <NotesIcon /> },
    { name: "TV", icon: <TvIcon /> },
    { name: "Music", icon: <MusicIcon /> },
    { name: "Podcasts", icon: <PodcastsIcon /> },
    { name: "App Store", icon: <AppStoreIcon /> },
    { name: "System Settings", icon: <SettingsIcon />, badge: "1" },
    { name: "Terminal", icon: <TerminalIcon />, running: true },
    { name: "Zoom", icon: <ZoomIcon /> },
    { name: "Visual Studio Code", icon: <CodeIcon />, running: true },
  ],
  [
    { name: "AnyDesk", icon: <AnyDeskIcon />, running: true },
    { name: "Microsoft AutoUpdate", icon: <UpdateIcon />, badge: "5", running: true },
    { name: "Preview", icon: <PreviewIcon /> },
    { name: "Server Manager", icon: <GearAppIcon />, running: true },
  ],
  [
    { name: "Downloads", icon: <FolderIcon /> },
    { name: "Bin", icon: <TrashIcon /> },
  ],
];

function Dock() {
  return (
    <nav
      aria-label="Dock"
      className="relative mx-auto mt-[2px] mb-[10px] flex h-[164px] w-fit shrink-0 rounded-[48px] border-2 border-white/20 bg-[linear-gradient(90deg,#14232b_0%,#14252d_8%,#12525a_14%,#134e54_16%,#12303a_23%,#13343f_55%,#123b47_65%,#12565f_71%,#123945_79%,#12404c_90%,#124754_100%)] px-[3px] shadow-[0_0_80px_rgba(0,0,0,0.25)]"
    >
      {dockGroups.map((group, g) => (
        <div key={g} className="flex">
          {g > 0 && (
            <div className="flex w-16 justify-center pt-[20px]">
              <div className="h-[120px] w-[2px] bg-[#5b8790]" />
            </div>
          )}
          {group.map((app) => (
            <button key={app.name} aria-label={app.name} className="flex w-[142px] flex-col items-center pt-[21px]">
              <span className="relative block">
                {app.icon}
                {app.badge && (
                  <span className="absolute -top-3 -right-4 flex h-[50px] min-w-[50px] items-center justify-center rounded-full bg-[#e0513f] px-[7px] text-[26px] leading-[32px] text-white shadow-[0_1px_3px_rgba(0,0,0,0.4)]">
                    {app.badge}
                  </span>
                )}
              </span>
              {app.running && <span className="mt-[21px] block size-2 rounded-full bg-[#93bfc9]" />}
            </button>
          ))}
        </div>
      ))}
    </nav>
  );
}

export default function App() {
  return (
    <div className="relative flex min-h-screen flex-col overflow-hidden bg-[#02232c] font-['Inter',sans-serif]">
      <Wallpaper />
      <MenuBar />
      <section aria-label="Safari" className="relative flex flex-1 flex-col overflow-hidden rounded-[22px] shadow-[0_0_4px_rgba(0,0,0,0.8)]">
        <TitleBar />
        <TabBar />
        <InsertPage />
      </section>
      <Dock />
    </div>
  );
}
